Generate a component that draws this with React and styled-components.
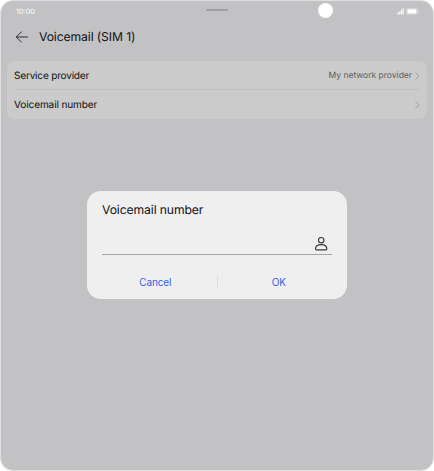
import styled, { createGlobalStyle } from "styled-components";

const GlobalStyles = createGlobalStyle`
  * {
    box-sizing: border-box;
    margin: 0;
    padding: 0;
  }

  body {
    background-color: #fff;
    font-family: Inter, "Noto Sans", sans-serif;
    text-rendering: geometricPrecision;
  }

  button {
    font-family: inherit;
  }
`;

const Screen = styled.div`
  position: relative;
  width: 434px;
  height: 471px;
  overflow: hidden;
  background-color: #c2c2c4;
  border: 1px solid #dfdfe0;
  border-radius: 13px;
`;

const StatusBar = styled.header`
  display: flex;
  align-items: center;
  justify-content: space-between;
  height: 20px;
  padding: 0 14px 0 15px;
`;

const Clock = styled.span`
  padding-top: 1px;
  color: #fff;
  font-size: 7.3px;
  line-height: 10px;
`;

const StatusIcons = styled.div`
  display: flex;
  align-items: center;
  gap: 2px;
`;

const DragHandle = styled.div`
  position: absolute;
  top: 8px;
  left: 205px;
  width: 22px;
  height: 2px;
  border-radius: 1px;
  background-color: #9f9fa1;
`;

const Camera = styled.div`
  position: absolute;
  top: 2.3px;
  left: 316.7px;
  width: 15px;
  height: 15px;
  border-radius: 50%;
  background-color: #fff;
`;

const TitleBar = styled.div`
  display: flex;
  align-items: center;
  gap: 10px;
  height: 32px;
  padding-left: 14px;
`;

const BackButton = styled.button`
  display: flex;
  border: none;
  background: none;
`;

const Title = styled.h1`
  color: #111112;
  font-size: 12.2px;
  font-weight: 430;
  letter-spacing: -0.12px;
  line-height: 18px;
`;

const List = styled.ul`
  margin: 8px 6px 0;
  padding: 0 7px;
  border-radius: 8px;
  background-color: #cbcbcb;
  list-style: none;
`;

const Row = styled.li`
  display: flex;
  align-items: center;
  height: 29px;

  &:not(:last-child) {
    padding-top: 1px;
    border-bottom: 1px solid #c0c0c1;
  }
`;

const RowLabel = styled.span`
  flex: 1;
  color: #101011;
  font-size: 10.1px;
  font-weight: 430;
  letter-spacing: ${({ $tracking }) => $tracking || -0.14}px;
  line-height: 14px;
`;

const RowValue = styled.span`
  margin-right: 3px;
  color: #606060;
  font-size: 8.5px;
  line-height: 12px;
`;

const Overlay = styled.div`
  position: absolute;
  inset: 0;
  display: flex;
  align-items: center;
  justify-content: center;
  padding-top: 19px;
`;

const Dialog = styled.div`
  width: 260px;
  height: 108px;
  padding: 10px 15px 0;
  border-radius: 14px;
  background-color: #efefef;
`;

const DialogTitle = styled.h2`
  color: #111112;
  font-size: 12.2px;
  font-weight: 430;
  letter-spacing: -0.12px;
  line-height: 18px;
`;

const Field = styled.div`
  display: flex;
  align-items: flex-end;
  justify-content: flex-end;
  height: 36px;
  padding: 0 4px 3px 0;
  border-bottom: 1px solid #a5a5a6;
`;

const Actions = styled.div`
  display: flex;
  align-items: center;
  height: 16px;
  margin-top: 19px;
`;

const Separator = styled.div`
  width: 1px;
  height: 14px;
  background-color: #dedede;
`;

const Action = styled.button`
  flex: 1;
  border: none;
  background: none;
  color: #2f63e8;
  font-size: 10px;
  font-weight: 430;
  letter-spacing: -0.14px;
  line-height: 14px;
  text-align: center;
  padding-left: ${({ $shift }) => $shift || 0}px;
  padding-right: ${({ $inset }) => $inset || 0}px;
`;

function SignalIcon() {
  return (
    <svg width="7" height="7" viewBox="0 0 7 7" fill="#f4f4f5">
      <path d="M0 6.5V5L1.5 4v2.5zM2 6.5V3.8L3.4 2.7v3.8zM3.9 6.5V2.3L5 1.3v5.2zM5.4 6.5V.9L6.8 0v6.5z" />
    </svg>
  );
}

function BatteryIcon() {
  return (
    <svg width="13" height="7" viewBox="0 0 13 7" fill="none">
      <rect x=".4" y=".4" width="11" height="6" rx="1.6" stroke="#dcdcdd" strokeWidth=".8" />
      <rect x="1.4" y="1.2" width="9" height="4.4" rx=".7" fill="#fff" />
      <path d="M12.1 2.3v2.2" stroke="#ececed" strokeWidth=".9" />
    </svg>
  );
}

function BackIcon() {
  return (
    <svg width="14" height="12" viewBox="0 0 14 12" fill="none" stroke="#29292a" strokeWidth=".95" strokeLinecap="round" strokeLinejoin="round">
      <path d="M12.5 6H1.4M6.4.9 1.3 6l5.1 5.1" />
    </svg>
  );
}

function ChevronIcon() {
  return (
    <svg width="5" height="8" viewBox="0 0 5 8" fill="none" stroke="#969697" strokeWidth=".8" strokeLinecap="round" strokeLinejoin="round">
      <path d="M.7.7 4.1 4 .7 7.3" />
    </svg>
  );
}

function ContactIcon() {
  return (
    <svg width="14" height="15" viewBox="0 0 14 15" fill="none" stroke="#39393a" strokeWidth="1.1" strokeLinejoin="round">
      <circle cx="7.2" cy="4.2" r="2.7" />
      <path d="M2.3 13.9c-.5 0-.8-.3-.8-.8 0-2.8 2.4-4.5 5.7-4.5s5.7 1.7 5.7 4.5c0 .5-.3.8-.8.8z" />
    </svg>
  );
}

function App() {
  return (
    <>
      <GlobalStyles />
      <Screen>
        <StatusBar>
          <Clock>10:00</Clock>
          <StatusIcons>
            <SignalIcon />
            <BatteryIcon />
          </StatusIcons>
        </StatusBar>
        <DragHandle />
        <Camera />

        <TitleBar>
          <BackButton aria-label="Back">
            <BackIcon />
          </BackButton>
          <Title>Voicemail (SIM 1)</Title>
        </TitleBar>

        <List>
          <Row>
            <RowLabel $tracking={-0.22}>Service provider</RowLabel>
            <RowValue>My network provider</RowValue>
            <ChevronIcon />
          </Row>
          <Row>
            <RowLabel>Voicemail number</RowLabel>
            <ChevronIcon />
          </Row>
        </List>

        <Overlay>
          <Dialog role="dialog" aria-label="Voicemail number">
            <DialogTitle>Voicemail number</DialogTitle>
            <Field>
              <ContactIcon />
            </Field>
            <Actions>
              <Action $inset={8}>Cancel</Action>
              <Separator />
              <Action $shift={8}>OK</Action>
            </Actions>
          </Dialog>
        </Overlay>
      </Screen>
    </>
  );
}

export default App;
